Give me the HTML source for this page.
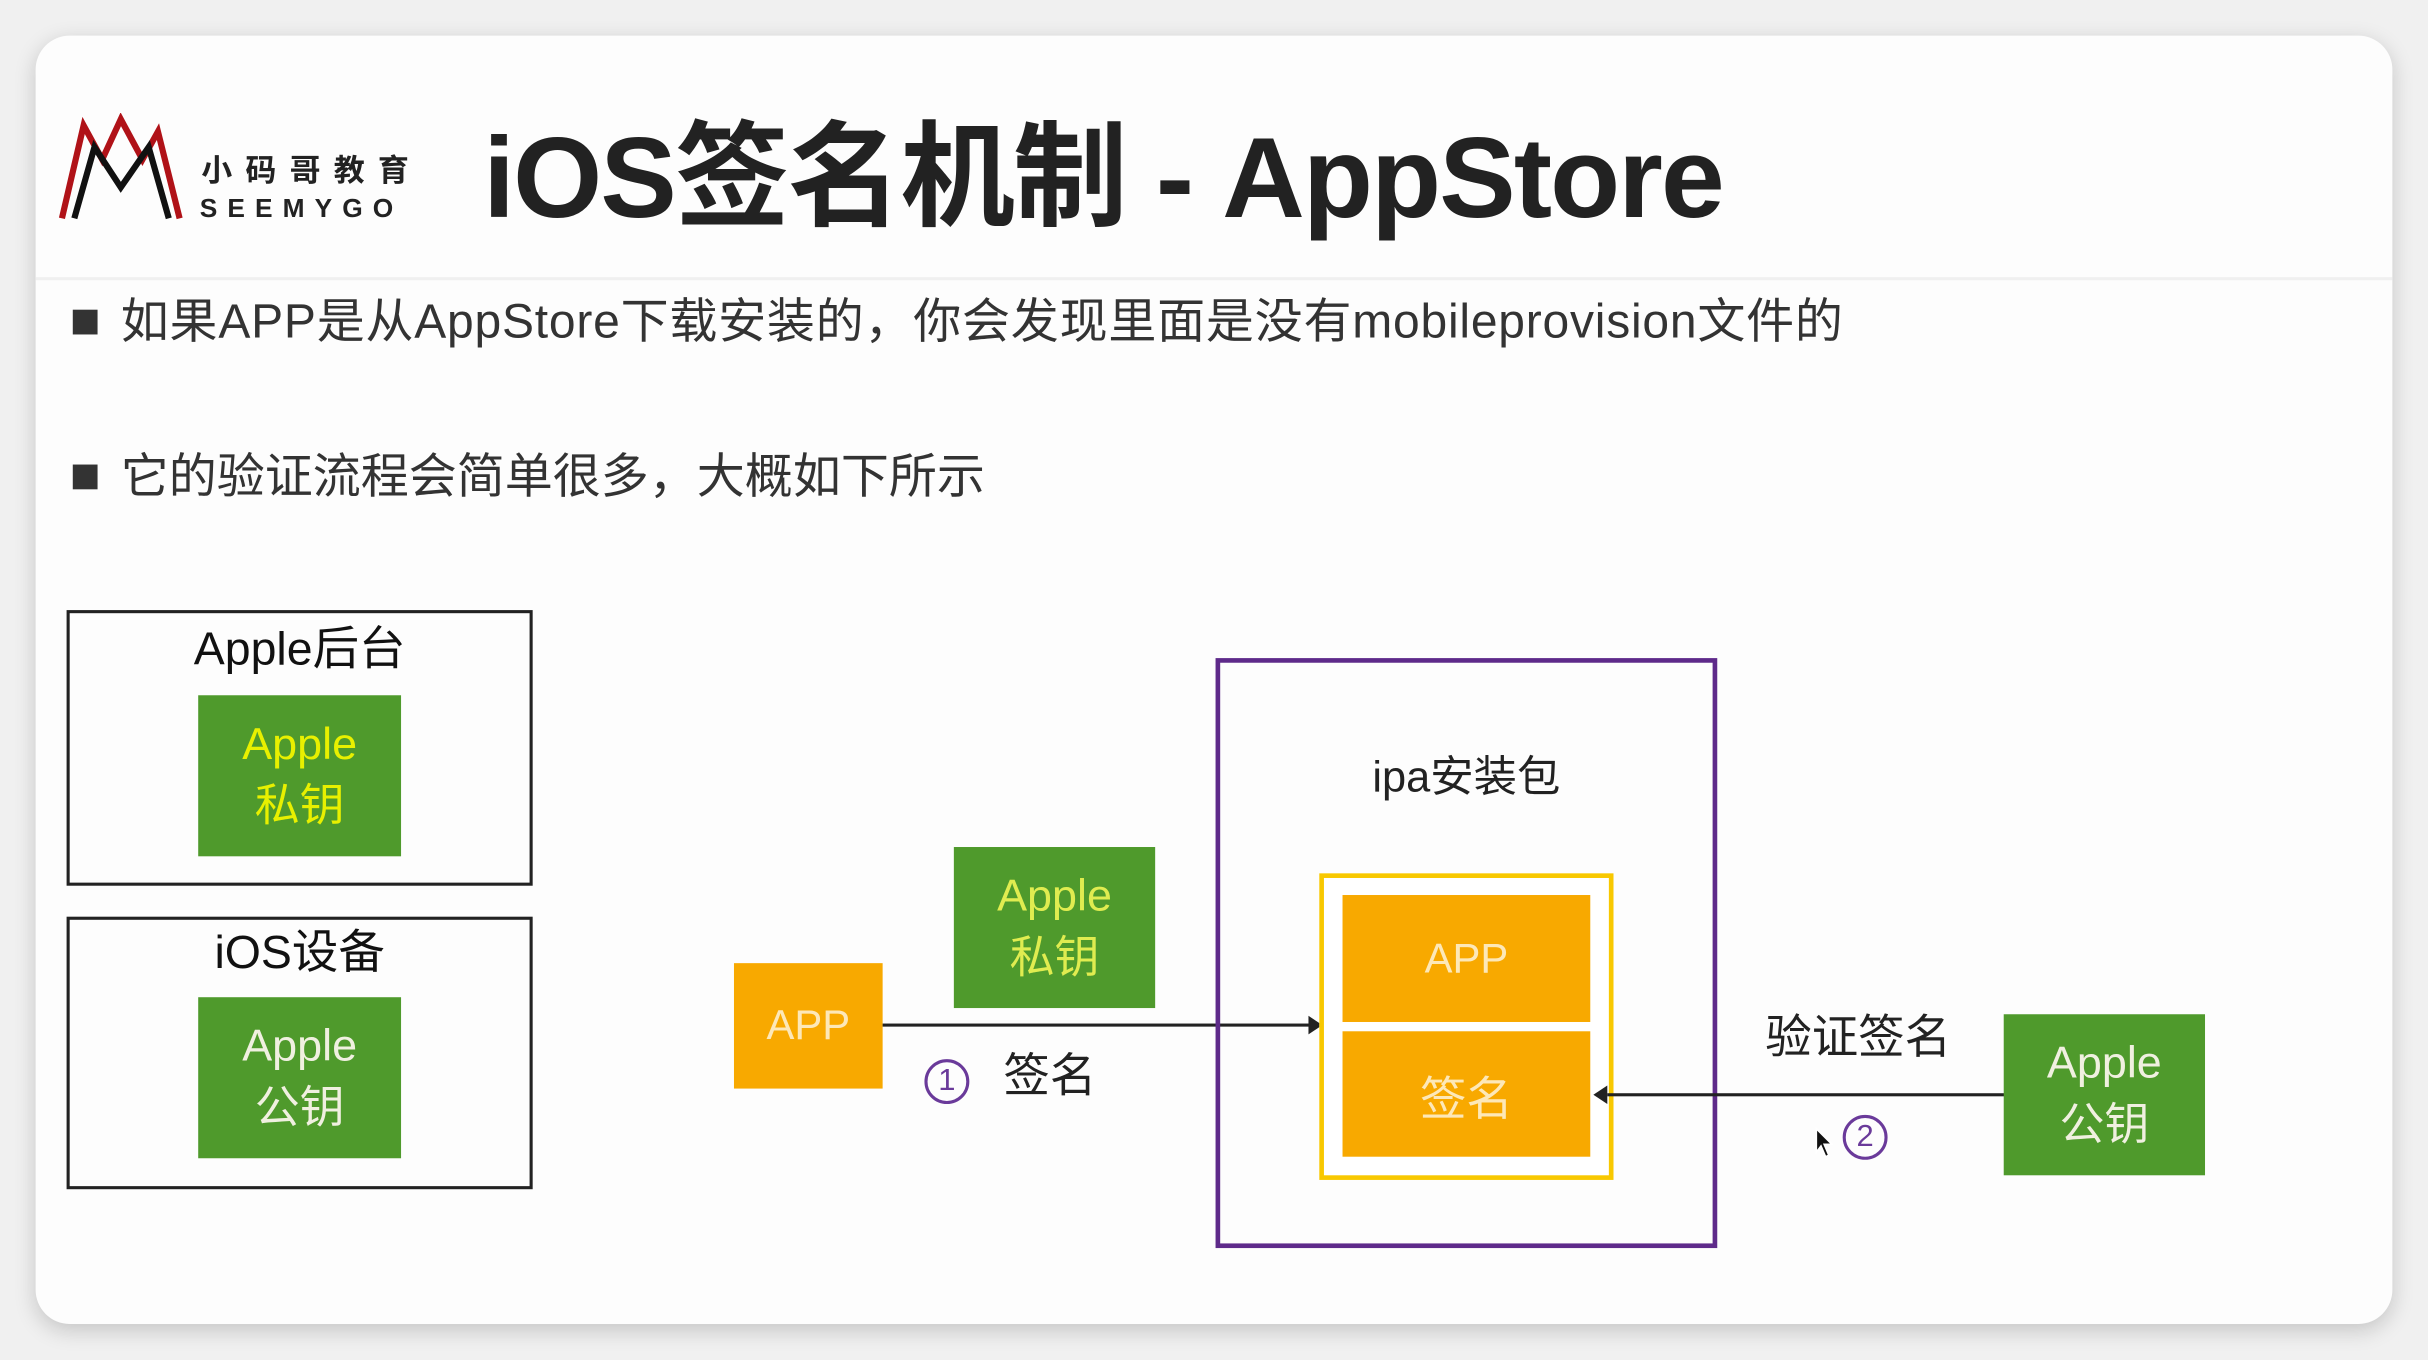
<!DOCTYPE html>
<html><head><meta charset="utf-8"><style>
html,body{margin:0;padding:0;width:2428px;height:1360px;overflow:hidden;background:#f0f0f0;}
#w{position:absolute;left:0;top:0;width:1568px;height:878px;transform:scale(1.54847);transform-origin:0 0;font-family:"Liberation Sans","Noto Sans CJK SC",sans-serif;}
.a{position:absolute;}
.card{left:23px;top:23px;width:1522px;height:832px;background:#fdfdfd;border-radius:22px;box-shadow:0 4px 14px rgba(0,0,0,0.18);}
.t{white-space:nowrap;line-height:1;}
.g{background:#4f9a2c;color:#f0f0e0;text-align:center;font-size:29px;line-height:40px;display:flex;flex-direction:column;justify-content:center;}
.o{background:#f8a900;color:#fde8b8;text-align:center;font-size:27px;display:flex;align-items:center;justify-content:center;}
.box{border:2px solid #222;}
.circ{width:25px;height:25px;border:2px solid #6a3a9a;border-radius:50%;color:#6a3a9a;font-size:20px;text-align:center;line-height:25px;}
</style></head><body><div id="w">
<div class="a card"></div>
<div class="a" style="left:23px;top:179px;width:1522px;height:2px;background:#f0f0f0"></div>
<svg class="a" style="left:36px;top:73px" width="95" height="70" viewBox="0 0 95 70">
<polyline points="4,68 18,8 30,30 42,4 56,30 66,12 80,68" fill="none" stroke="#b01218" stroke-width="4"/>
<polyline points="12,68 25,22 42,48 60,22 73,68" fill="none" stroke="#111" stroke-width="4"/>
</svg>
<div class="a t" style="left:130px;top:101px;font-size:20px;font-weight:bold;letter-spacing:8.5px;color:#222">小码哥教育</div>
<div class="a t" style="left:129px;top:126px;font-size:17px;font-weight:bold;letter-spacing:6.5px;color:#222">SEEMYGO</div>
<div class="a t" style="left:312px;top:78px;font-size:74px;font-weight:bold;color:#222;letter-spacing:-1.2px">iOS签名机制 - AppStore</div>
<div class="a" style="left:47px;top:200px;width:16px;height:16px;background:#333"></div>
<div class="a t" style="left:78px;top:192px;font-size:31px;color:#333;letter-spacing:0.5px">如果APP是从AppStore下载安装的，你会发现里面是没有mobileprovision文件的</div>
<div class="a" style="left:47px;top:300px;width:16px;height:16px;background:#333"></div>
<div class="a t" style="left:78px;top:292px;font-size:31px;color:#333;letter-spacing:0px">它的验证流程会简单很多，大概如下所示</div>

<div class="a box" style="left:43px;top:394px;width:297px;height:174px"></div>
<div class="a t" style="left:43px;top:405px;width:301px;text-align:center;font-size:30px;color:#111">Apple后台</div>
<div class="a g" style="left:128px;top:449px;width:131px;height:104px;color:#e8f000"><div>Apple</div><div>私钥</div></div>
<div class="a box" style="left:43px;top:592px;width:297px;height:172px"></div>
<div class="a t" style="left:43px;top:601px;width:301px;text-align:center;font-size:30px;color:#111">iOS设备</div>
<div class="a g" style="left:128px;top:644px;width:131px;height:104px"><div>Apple</div><div>公钥</div></div>

<div class="a o" style="left:474px;top:622px;width:96px;height:81px">APP</div>
<div class="a g" style="left:616px;top:547px;width:130px;height:104px;color:#e0ec50"><div>Apple</div><div>私钥</div></div>
<div class="a" style="left:570px;top:661px;width:276px;height:2px;background:#222"></div>
<div class="a" style="left:845px;top:656px;width:0;height:0;border-left:9px solid #222;border-top:6px solid transparent;border-bottom:6px solid transparent"></div>
<div class="a circ" style="left:597px;top:684px">1</div>
<div class="a t" style="left:648px;top:681px;font-size:30px;color:#222">签名</div>

<div class="a" style="left:785px;top:425px;width:318px;height:375px;border:3px solid #5e2a8a"></div>
<div class="a t" style="left:785px;top:488px;width:324px;text-align:center;font-size:28px;color:#222">ipa安装包</div>
<div class="a" style="left:852px;top:564px;width:184px;height:192px;border:3px solid #f8c800;background:#fff"></div>
<div class="a o" style="left:867px;top:578px;width:160px;height:82px">APP</div>
<div class="a o" style="left:867px;top:666px;width:160px;height:81px;font-size:30px">签名</div>

<div class="a t" style="left:1140px;top:656px;font-size:30px;color:#222">验证签名</div>
<div class="a" style="left:1038px;top:706px;width:257px;height:2px;background:#222"></div>
<div class="a" style="left:1029px;top:701px;width:0;height:0;border-right:9px solid #222;border-top:6px solid transparent;border-bottom:6px solid transparent"></div>
<div class="a circ" style="left:1190px;top:720px">2</div>
<svg class="a" style="left:1172px;top:728px" width="12" height="20" viewBox="0 0 12 20"><path d="M1,1 L1,16 L4,12 L7,19 L9,18 L6,11 L11,11 Z" fill="#111" stroke="#fff" stroke-width="1"/></svg>
<div class="a g" style="left:1294px;top:655px;width:130px;height:104px"><div>Apple</div><div>公钥</div></div>
</div></body></html>
